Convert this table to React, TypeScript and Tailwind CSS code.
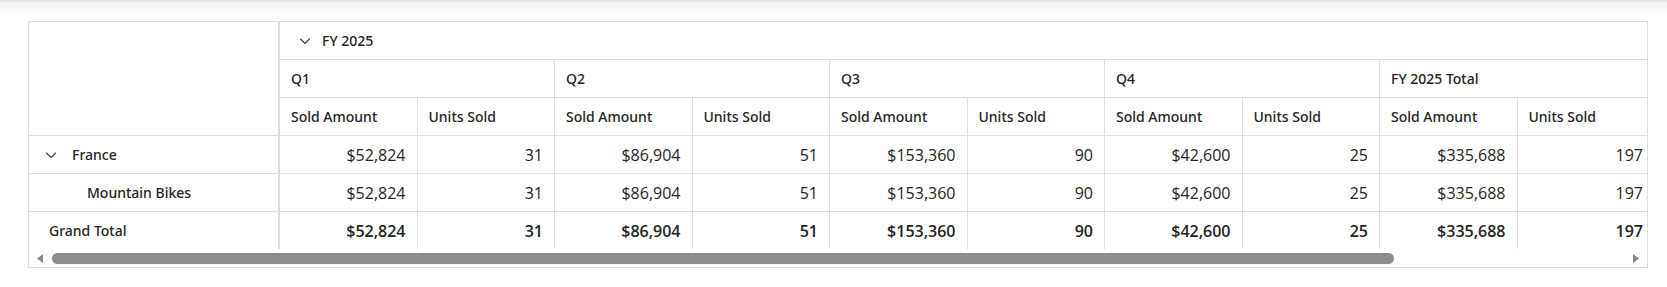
import React from "react";

const quarters = ["Q1", "Q2", "Q3", "Q4", "FY 2025 Total"];

const rows = [
  { label: "France", kind: "group", values: ["$52,824", "31", "$86,904", "51", "$153,360", "90", "$42,600", "25", "$335,688", "197"] },
  { label: "Mountain Bikes", kind: "child", values: ["$52,824", "31", "$86,904", "51", "$153,360", "90", "$42,600", "25", "$335,688", "197"] },
  { label: "Grand Total", kind: "total", values: ["$52,824", "31", "$86,904", "51", "$153,360", "90", "$42,600", "25", "$335,688", "197"] },
];

const label = "font-['Noto_Sans','Open_Sans',sans-serif] text-[14px] font-medium";

function Chevron() {
  return (
    <svg width="12" height="12" viewBox="0 0 12 12" fill="none" className="shrink-0">
      <path d="M1.5 4 L6 8.5 L10.5 4" stroke="#424242" strokeWidth="1.1" strokeLinecap="round" strokeLinejoin="round" />
    </svg>
  );
}

export default function App() {
  return (
    <div className="w-[1667px] h-[287px] bg-white overflow-hidden font-['Open_Sans','Noto_Sans',sans-serif] text-[#242424]">
      <div className="h-[2px] bg-[#e4e4e4]" />
      <div className="h-[14px] bg-gradient-to-b from-[#f2f2f2] to-white" />
      <div className="ml-[28px] mt-[5px] w-[1620px] h-[247px] border border-[#dedede] overflow-hidden flex flex-col">
        <div className="grid grid-cols-[251px_repeat(10,137.5px)] grid-rows-[38px_38px_38px_38px_38px_37px] w-[1626px] shrink-0">
          <div className="row-span-3 border-r-2 border-b border-[#dcdcdc]" />
          <div className={"col-span-10 border-b border-[#e0e0e0] flex items-center gap-[11px] pl-[19px] " + label}>
            <Chevron />
            <span>FY 2025</span>
          </div>
          {quarters.map((q) => (
            <div key={q} className={"col-span-2 border-b border-r border-[#e0e0e0] flex items-center pl-[11px] " + label}>
              {q}
            </div>
          ))}
          {quarters.map((q) => (
            <React.Fragment key={q + "m"}>
              <div className={"border-b border-r border-[#e0e0e0] flex items-center pl-[11px] " + label}>Sold Amount</div>
              <div className={"border-b border-r border-[#e0e0e0] flex items-center pl-[11px] " + label}>Units Sold</div>
            </React.Fragment>
          ))}
          {rows.map((r, ri) => (
            <React.Fragment key={r.label}>
              <div
                className={
                  "border-r-2 border-[#dcdcdc] flex items-center " +
                  label +
                  " " +
                  (ri < 2 ? "border-b " : "") +
                  (r.kind === "group" ? "pl-[16px] gap-[15px]" : r.kind === "child" ? "pl-[58px]" : "pl-[20px]")
                }
              >
                {r.kind === "group" && <Chevron />}
                <span>{r.label}</span>
              </div>
              {r.values.map((v, vi) => (
                <div
                  key={vi}
                  className={
                    "border-r border-[#e0e0e0] flex items-center justify-end pr-[11px] text-[16px] " +
                    (ri < 2 ? "border-b " : "") +
                    (r.kind === "total" ? "font-semibold" : "font-normal")
                  }
                >
                  {v}
                </div>
              ))}
            </React.Fragment>
          ))}
        </div>
        <div className="flex-1 flex items-center px-[8px] gap-[9px]">
          <svg width="6" height="9" viewBox="0 0 6 9" className="shrink-0">
            <path d="M6 0 L0 4.5 L6 9 Z" fill="#8a8a8a" />
          </svg>
          <div className="flex-1 flex items-center">
            <div className="w-[1342px] h-[11px] rounded-full bg-[#8c8c8c]" />
          </div>
          <svg width="6" height="9" viewBox="0 0 6 9" className="shrink-0">
            <path d="M0 0 L6 4.5 L0 9 Z" fill="#8a8a8a" />
          </svg>
        </div>
      </div>
    </div>
  );
}
